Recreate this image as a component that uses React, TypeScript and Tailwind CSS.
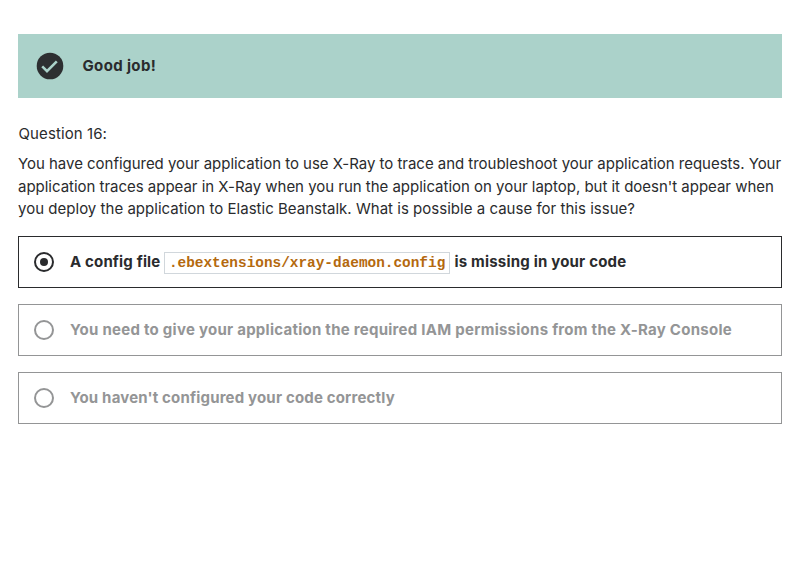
import type { ReactNode } from "react";

function Radio({ checked = false }: { checked?: boolean }) {
  return (
    <svg width="20" height="20" viewBox="0 0 20 20" className="shrink-0" fill="none">
      <circle cx="10" cy="10" r="9" stroke="currentColor" strokeWidth="2" />
      {checked && <circle cx="10" cy="10" r="4" fill="currentColor" />}
    </svg>
  );
}

function Answer({ checked = false, children }: { checked?: boolean; children: ReactNode }) {
  return (
    <li
      className={`flex h-[52px] items-center gap-4 border px-[15px] ${
        checked ? "border-[#2a2b2d] text-[#2a2b2d]" : "border-[#949596] text-[#949596]"
      }`}
    >
      <Radio checked={checked} />
      <div className="flex items-center pt-px font-bold whitespace-nowrap">{children}</div>
    </li>
  );
}

export default function App() {
  return (
    <main className="h-[572px] overflow-hidden bg-white pt-[34px] pr-[27px] pl-[18px] font-['Inter',sans-serif] text-[15px] leading-[22.4px] text-[#2a2b2d]">
      <div className="flex h-16 items-center gap-[18.5px] bg-[#abd2ca] pl-[18px]">
        <svg width="28" height="28" viewBox="0 0 28 28" fill="none">
          <circle cx="14" cy="14" r="13.3" fill="#2d2f31" />
          <path d="m6.2 14.4 4.8 4.7 9.8-9.7" stroke="#abd2ca" strokeWidth="2.6" />
        </svg>
        <span className="font-bold tracking-[0.35px]">Good job!</span>
      </div>
      <h1 className="mt-[25px] pl-[0.5px] tracking-[0.1px] whitespace-nowrap">Question 16:</h1>
      <p className="mt-[8px] whitespace-nowrap">
        <span className="block w-max tracking-[-0.028px]">You have configured your application to use X-Ray to trace and troubleshoot your application requests. Your</span>
        <span className="block w-max tracking-[-0.02px]">application traces appear in X-Ray when you run the application on your laptop, but it doesn't appear when</span>
        <span className="block w-max tracking-[0.022px]">you deploy the application to Elastic Beanstalk. What is possible a cause for this issue?</span>
      </p>
      <ul className="mt-[15px] flex flex-col gap-4">
        <Answer checked>
          <span className="tracking-[0.15px]">A config file</span>
          <code className="mx-1 mt-px flex h-[22px] w-[286px] items-center border border-[#d1d7dc] px-[3.5px] font-['Liberation_Mono',monospace] text-[14.4px] text-[#b4690e]">
            <span className="pt-px">.ebextensions/xray-daemon.config</span>
          </code>
          <span className="tracking-[0.2px]">is missing in your code</span>
        </Answer>
        <Answer>
          <span className="tracking-[0.26px]">You need to give your application the required IAM permissions from the X-Ray Console</span>
        </Answer>
        <Answer>
          <span className="tracking-[0.175px]">You haven't configured your code correctly</span>
        </Answer>
      </ul>
    </main>
  );
}
